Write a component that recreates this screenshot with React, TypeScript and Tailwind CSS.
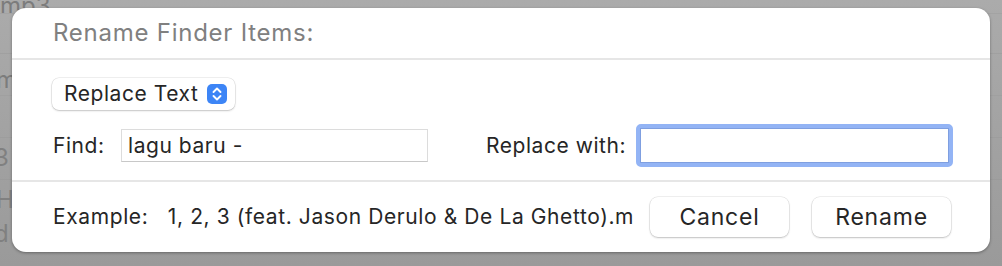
import React from "react";

function Stepper() {
  return (
    <div className="flex h-[20px] w-[20px] items-center justify-center rounded-[5px] bg-[#3d85f6]">
      <svg width="12" height="16" viewBox="0 0 12 16" fill="none">
        <path d="M2.5 6 L6 2.5 L9.5 6" stroke="white" strokeWidth="1.9" strokeLinecap="round" strokeLinejoin="round" />
        <path d="M2.5 10 L6 13.5 L9.5 10" stroke="white" strokeWidth="1.9" strokeLinecap="round" strokeLinejoin="round" />
      </svg>
    </div>
  );
}

export default function App() {
  return (
    <div
      className="relative h-[266px] w-[1002px] overflow-hidden bg-gradient-to-b from-[#ababab] to-[#9a9a9a]"
      style={{ fontFamily: "Inter, 'Noto Sans', sans-serif" }}
    >
      {/* ghosted Finder content behind the sheet */}
      <div className="absolute left-0 top-[-12px] text-[24px] text-[#7c7c7c]">mp3</div>
      <div className="absolute left-[-4px] top-[62px] text-[24px] text-[#7c7c7c]">m</div>
      <div className="absolute left-[-6px] top-[140px] text-[24px] text-[#808080]">3</div>
      <div className="absolute left-[-4px] top-[182px] text-[24px] text-[#808080]">H</div>
      <div className="absolute left-[-6px] top-[216px] text-[24px] text-[#808080]">d</div>
      <div className="absolute left-0 right-0 top-[13px] h-px bg-[#a3a3a3]" />
      <div className="absolute left-0 right-0 top-[53px] h-px bg-[#a0a0a0]" />
      <div className="absolute left-0 right-0 top-[95px] h-px bg-[#a0a0a0]" />
      <div className="absolute left-0 right-0 top-[137px] h-px bg-[#9d9d9d]" />
      <div className="absolute left-0 right-0 top-[179px] h-px bg-[#9b9b9b]" />

      <div className="relative ml-[12px] mt-[8px] flex h-[244px] w-[978px] flex-col rounded-[14px] bg-white shadow-[0_1px_3px_rgba(0,0,0,0.35)]">
        <div className="flex h-[50px] items-center pl-[41px] text-[24px] tracking-[0.75px] text-[#808080]">
          Rename Finder Items:
        </div>
        <div className="h-[2px] bg-[#e6e6e6]" />
        <div className="flex h-[120px] flex-col pl-[40px] pr-[36px] pt-[18px] text-[21px] tracking-[0.55px] text-[#262626]">
          <div className="flex">
            <div className="flex h-[32px] items-center gap-[9px] rounded-[7px] bg-white pl-[12px] pr-[8px] shadow-[0_0_0_0.5px_rgba(0,0,0,0.12),0_1px_2px_rgba(0,0,0,0.18)]">
              <span>Replace Text</span>
              <Stepper />
            </div>
          </div>
          <div className="mt-[14px] flex items-center">
            <span className="ml-[1px] w-[68px]">Find:</span>
            <div className="flex h-[33px] w-[307px] items-center border border-[#dcdcdc] border-b-[#c8c8c8] pl-[6px]">
              lagu baru -
            </div>
            <span className="ml-[58px] w-[150px]">Replace with:</span>
            <div className="rounded-[5px] border-[4px] border-[#93b4f5] bg-white">
              <div className="h-[35px] w-[309px] border border-[#7f9fe0] bg-white" />
            </div>
          </div>
        </div>
        <div className="h-[2px] bg-[#e6e6e6]" />
        <div className="flex flex-1 items-center pl-[41px] pr-[39px] text-[21px] tracking-[0.6px] text-[#262626]">
          <span className="flex-1">Example:&nbsp;&nbsp; 1, 2, 3 (feat. Jason Derulo &amp; De La Ghetto).m</span>
          <div className="flex h-[40px] w-[139px] items-center justify-center rounded-[8px] bg-white text-[23px] tracking-[0.8px] shadow-[0_0_0_0.5px_rgba(0,0,0,0.12),0_1px_2px_rgba(0,0,0,0.2)]">
            Cancel
          </div>
          <div className="ml-[23px] flex h-[40px] w-[139px] items-center justify-center rounded-[8px] bg-white text-[23px] tracking-[0.8px] shadow-[0_0_0_0.5px_rgba(0,0,0,0.12),0_1px_2px_rgba(0,0,0,0.2)]">
            Rename
          </div>
        </div>
      </div>
    </div>
  );
}
